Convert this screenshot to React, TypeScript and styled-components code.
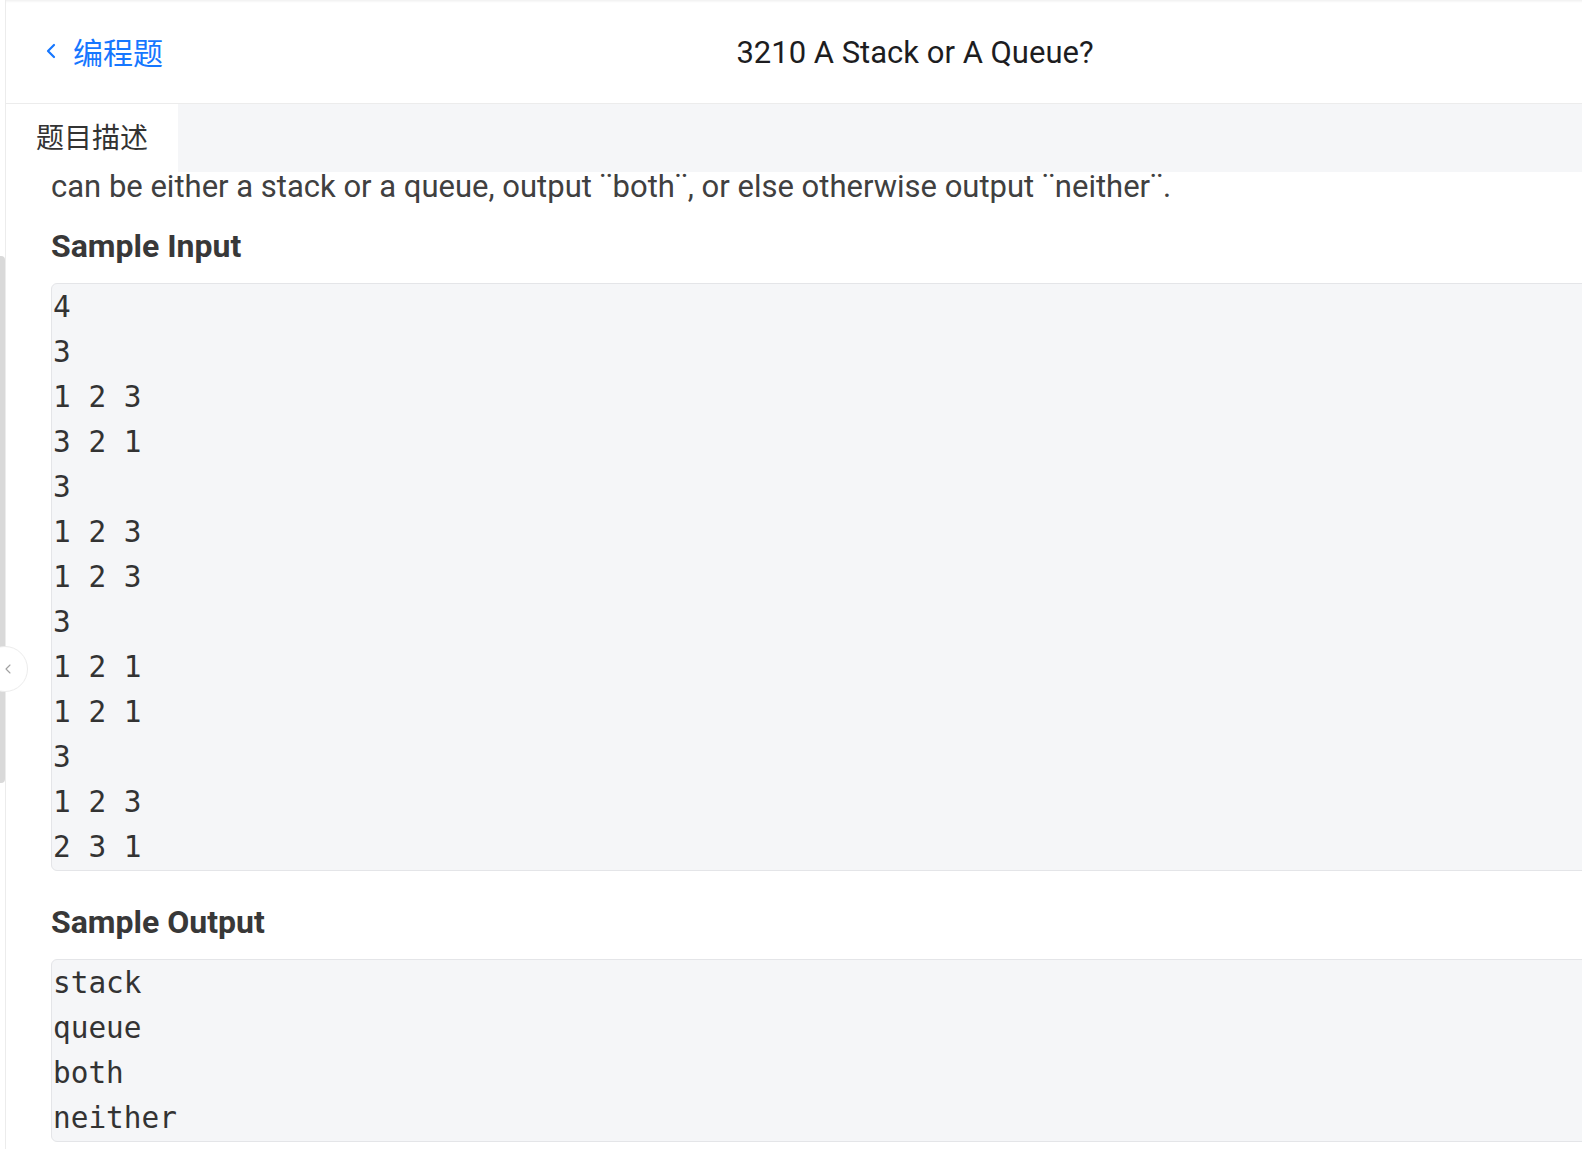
import React from "react";
import styled, { createGlobalStyle } from "styled-components";
import { ChevronLeft } from "lucide-react";

const GlobalStyle = createGlobalStyle`
  html, body {
    margin: 0;
    padding: 0;
    background: #ffffff;
    overflow: hidden;
  }
  body {
    font-family: Roboto, "Noto Sans CJK SC", sans-serif;
  }
`;

const Page = styled.div`
  display: flex;
  width: 1582px;
  height: 1149px;
  overflow: hidden;
  position: relative;
  background: #fff;
`;

const Rail = styled.div`
  flex: 0 0 5px;
  display: flex;
  flex-direction: column;
  padding-top: 256px;
`;

const RailThumb = styled.div`
  width: 5px;
  height: 527px;
  background: #d9d9d9;
  border-radius: 0 4px 4px 0;
`;

const Toggle = styled.button`
  position: absolute;
  left: -18px;
  top: 646px;
  width: 46px;
  height: 46px;
  border-radius: 50%;
  border: 1px solid #ececec;
  background: #fff;
  display: flex;
  align-items: center;
  justify-content: flex-end;
  padding: 0 11px 0 0;
  color: #a0a0a0;
  z-index: 3;
`;

const Main = styled.div`
  flex: 0 0 1818px;
  border-left: 1px solid #ececec;
  display: flex;
  flex-direction: column;
  min-width: 0;
`;

const Header = styled.header`
  height: 103px;
  display: grid;
  grid-template-columns: 1fr auto 1fr;
  align-items: center;
  border-bottom: 1px solid #ececec;
  box-shadow: inset 0 3px 3px -2px rgba(0, 0, 0, 0.08);
  padding: 0 33px;
`;

const Back = styled.a`
  display: flex;
  align-items: center;
  gap: 10px;
  color: #1677ff;
  font-family: Roboto, "Noto Sans CJK SC", sans-serif;
  font-size: 30px;
  text-decoration: none;
  justify-self: start;
  padding-bottom: 2px;
`;

const Title = styled.h1`
  margin: 0;
  font-family: Roboto, "Noto Sans CJK SC", sans-serif;
  font-size: 31px;
  font-weight: 400;
  color: #1d1d1f;
  padding-top: 2px;
`;

const TabBar = styled.div`
  height: 68px;
  display: flex;
  background: #f5f6f8;
  position: relative;
  z-index: 2;
`;

const Tab = styled.div<{ $active?: boolean }>`
  width: 172px;
  box-sizing: border-box;
  padding-left: 30px;
  display: flex;
  align-items: center;
  background: ${(p) => (p.$active ? "#ffffff" : "transparent")};
  font-family: "Noto Sans CJK SC", sans-serif;
  font-size: 28px;
  color: #333;
  padding-bottom: 4px;
`;

const Content = styled.div`
  padding: 0 39px 0 45px;
  display: flex;
  flex-direction: column;
`;

const Paragraph = styled.p`
  margin: 0;
  font-family: Roboto, sans-serif;
  font-size: 31px;
  line-height: 30px;
  color: #404040;
  white-space: nowrap;
`;

const Heading = styled.h3<{ $top: number }>`
  margin: ${(p) => p.$top}px 0 17px;
  font-family: Roboto, sans-serif;
  font-size: 32px;
  line-height: 40px;
  font-weight: 700;
  color: #383838;
`;

const Code = styled.pre`
  margin: 0;
  padding: 1px 0 0 1px;
  box-sizing: border-box;
  background: #f5f6f8;
  border: 1px solid #e4e5e8;
  border-radius: 6px;
  font-family: "DejaVu Sans Mono", "Liberation Mono", monospace;
  font-size: 29.4px;
  line-height: 45px;
  color: #333;
`;

const sampleInput = `4
3
1 2 3
3 2 1
3
1 2 3
1 2 3
3
1 2 1
1 2 1
3
1 2 3
2 3 1`;

const sampleOutput = `stack
queue
both
neither`;

export default function App() {
  return (
    <>
      <GlobalStyle />
      <Page>
        <Rail>
          <RailThumb />
        </Rail>
        <Toggle aria-label="collapse">
          <ChevronLeft size={16} strokeWidth={1.6} />
        </Toggle>
        <Main>
          <Header>
            <Back href="#">
              <ChevronLeft size={24} strokeWidth={2.2} />
              编程题
            </Back>
            <Title>3210 A Stack or A Queue?</Title>
            <div />
          </Header>
          <TabBar>
            <Tab $active>题目描述</Tab>
          </TabBar>
          <Content>
            <Paragraph>
              can be either a stack or a queue, output ¨both¨, or else otherwise output ¨neither¨.
            </Paragraph>
            <Heading $top={24}>Sample Input</Heading>
            <Code>{sampleInput}</Code>
            <Heading $top={31}>Sample Output</Heading>
            <Code>{sampleOutput}</Code>
          </Content>
        </Main>
      </Page>
    </>
  );
}
